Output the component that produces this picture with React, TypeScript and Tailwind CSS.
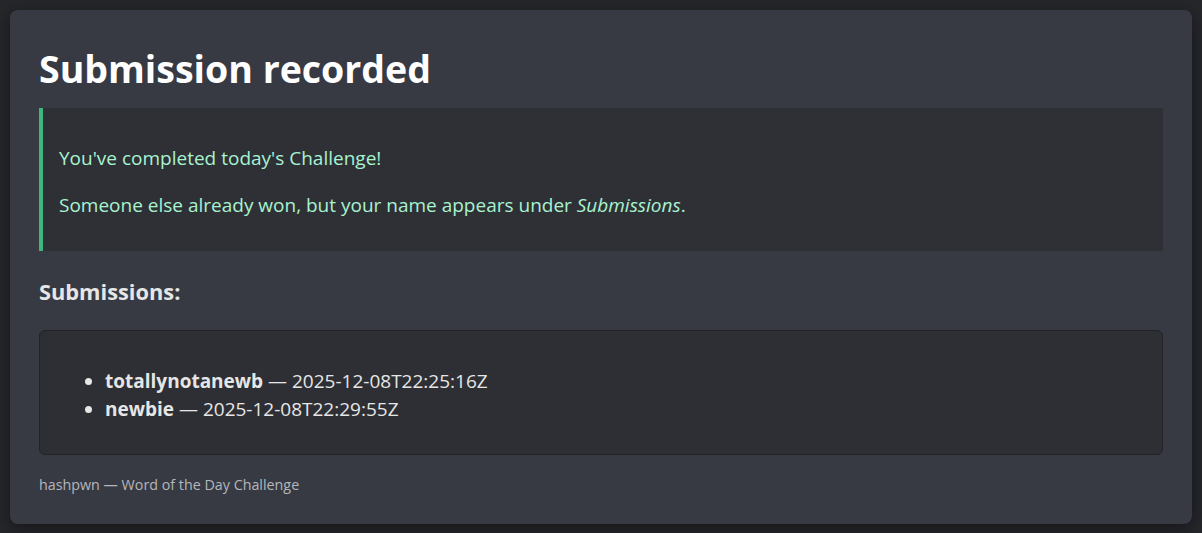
export default function App() {
  return (
    <div className="min-h-[533px] w-full bg-[#26272b] p-[10px] font-['Open_Sans',sans-serif] text-[#e6e6e6]">
      <div className="rounded-lg bg-[#373a43] px-[29px] pb-[29px] pt-[36px] shadow-[0_4px_18px_rgba(0,0,0,0.45)]">
        <h1 className="text-[37.5px] font-bold leading-[45px] text-white">Submission recorded</h1>
        <div className="mt-[17px] border-l-4 border-[#3fb67d] bg-[#2f3036] pb-[33px] pl-[16px] pr-[17px] pt-[37px] text-[19px] leading-[26.6px] text-[#a7f3d0]">
          <p>You've completed today's Challenge!</p>
          <p className="mt-[20px]">
            Someone else already won, but your name appears under <em>Submissions</em>.
          </p>
        </div>
        <h3 className="mt-[26px] text-[21.8px] font-bold leading-[30px] text-[#e6e6e6]">Submissions:</h3>
        <div className="mt-[23px] rounded-md border border-[#222327] bg-[#2e2f34] pb-[31px] pl-[65px] pt-[36px] text-[19px] leading-[28px]">
          <ul className="list-disc">
            <li>
              <strong>totallynotanewb</strong> — 2025-12-08T22:25:16Z
            </li>
            <li>
              <strong>newbie</strong> — 2025-12-08T22:29:55Z
            </li>
          </ul>
        </div>
        <p className="mt-[20px] text-[14.3px] leading-[20px] text-[#b4b6bb]">hashpwn — Word of the Day Challenge</p>
      </div>
    </div>
  );
}
